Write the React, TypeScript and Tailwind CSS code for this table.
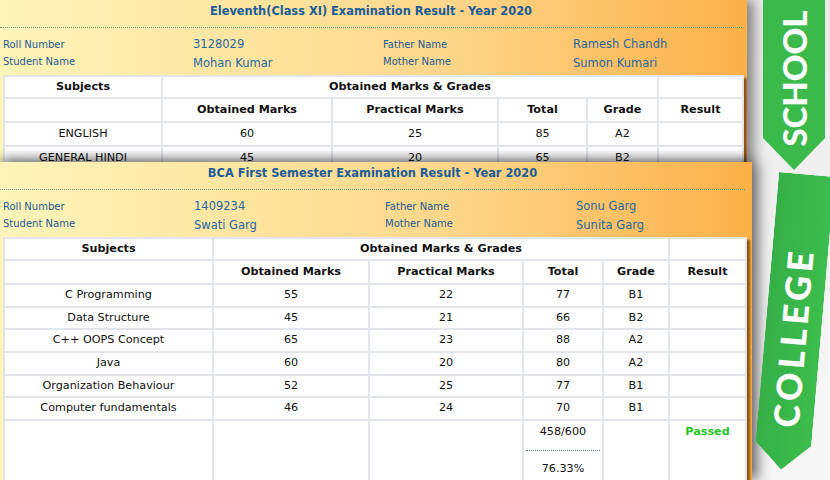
import React from "react";

type Row = [string, string, string, string, string];

const schoolRows: Row[] = [
  ["ENGLISH", "60", "25", "85", "A2"],
  ["GENERAL HINDI", "45", "20", "65", "B2"],
];

const collegeRows: Row[] = [
  ["C Programming", "55", "22", "77", "B1"],
  ["Data Structure", "45", "21", "66", "B2"],
  ["C++ OOPS Concept", "65", "23", "88", "A2"],
  ["Java", "60", "20", "80", "A2"],
  ["Organization Behaviour", "52", "25", "77", "B1"],
  ["Computer fundamentals", "46", "24", "70", "B1"],
];

const cell = "border-2 border-[#e2e6eb] p-0 text-center align-middle text-[11.2px] text-[#111111]";
const head = cell + " font-bold";

function Info(props: {
  grid: string;
  roll: string;
  name: string;
  father: string;
  mother: string;
}) {
  const label = "text-[10px] text-[#1c5b96] whitespace-nowrap";
  const value = "text-[11.5px] text-[#2767a1] whitespace-nowrap";
  return (
    <div className={"grid grid-rows-[17px_17px] pl-[3px] pt-[8px] pb-[5px] leading-[17px] " + props.grid}>
      <div className={label}>Roll Number</div>
      <div className={value}>{props.roll}</div>
      <div className={label}>Father Name</div>
      <div className={value}>{props.father}</div>
      <div className={label}>Student Name</div>
      <div className={value + " pt-[2px]"}>{props.name}</div>
      <div className={label}>Mother Name</div>
      <div className={value + " pt-[2px]"}>{props.mother}</div>
    </div>
  );
}

function ResultTable(props: {
  width: string;
  cols: string[];
  rows: Row[];
  h1: string;
  h2: string;
  rowH: string;
  withTotal?: boolean;
}) {
  return (
    <table
      className={
        "table-fixed border-collapse bg-white shadow-[3px_3px_2px_rgba(120,66,10,0.85)] " + props.width
      }
    >
      <colgroup>
        {props.cols.map((c, i) => (
          <col key={i} className={c} />
        ))}
      </colgroup>
      <tbody>
        <tr className={props.h1}>
          <td className={head}>Subjects</td>
          <td className={head} colSpan={4}>
            Obtained Marks &amp; Grades
          </td>
          <td className={cell}></td>
        </tr>
        <tr className={props.h2}>
          <td className={cell}></td>
          <td className={head}>Obtained Marks</td>
          <td className={head}>Practical Marks</td>
          <td className={head}>Total</td>
          <td className={head}>Grade</td>
          <td className={head}>Result</td>
        </tr>
        {props.rows.map((r, i) => (
          <tr key={i} className={props.rowH}>
            <td className={cell}>{r[0]}</td>
            <td className={cell}>{r[1]}</td>
            <td className={cell}>{r[2]}</td>
            <td className={cell}>{r[3]}</td>
            <td className={cell}>{r[4]}</td>
            <td className={cell}></td>
          </tr>
        ))}
        {props.withTotal && (
          <tr className="h-[80px]">
            <td className={cell + " !align-top"}></td>
            <td className={cell + " !align-top"}></td>
            <td className={cell + " !align-top"}></td>
            <td className={cell + " !align-top"}>
              <div className="pt-[3px] leading-[16px]">458/600</div>
              <div className="mx-[2px] mt-[10px] border-t border-dotted border-[#5c7590]"></div>
              <div className="mt-[10px] leading-[16px]">76.33%</div>
            </td>
            <td className={cell + " !align-top"}></td>
            <td className={cell + " !align-top"}>
              <div className="pt-[3px] leading-[16px] font-bold text-[#1fc41f]">Passed</div>
            </td>
          </tr>
        )}
      </tbody>
    </table>
  );
}

const cardBg =
  "bg-[linear-gradient(to_right,#fef4b9_0%,#fde6a2_30%,#fdd68a_60%,#fbb048_100%)]";

export default function App() {
  return (
    <div className="w-[830px] h-[480px] overflow-hidden flex bg-[linear-gradient(to_bottom,#ececec,#f7f7f7)] font-['DejaVu_Sans',Verdana,sans-serif]">
      <div className="w-[752px] shrink-0 flex flex-col">
        {/* School card */}
        <div
          className={
            "relative z-0 w-[747px] h-[162px] shrink-0 overflow-hidden shadow-[7px_0_12px_rgba(0,0,0,0.45)] " +
            cardBg
          }
        >
          <div className="mr-[5px] pt-[3px] pb-[8px] text-center text-[11.4px] leading-[16px] font-bold text-[#1b5c99] border-b border-dotted border-[#5b957c]">
            Eleventh(Class XI) Examination Result - Year 2020
          </div>
          <Info
            grid="grid-cols-[190px_190px_190px_1fr]"
            roll="3128029"
            name="Mohan Kumar"
            father="Ramesh Chandh"
            mother="Sumon Kumari"
          />
          <div className="pl-[3px]">
            <ResultTable
              width="w-[739px]"
              cols={["w-[158px]", "w-[170px]", "w-[166px]", "w-[89px]", "w-[71px]", "w-[85px]"]}
              rows={schoolRows}
              h1="h-[22px]"
              h2="h-[24px]"
              rowH="h-[24px]"
            />
          </div>
        </div>

        {/* College card */}
        <div
          className={
            "relative z-[1] w-[752px] h-[318px] shrink-0 overflow-hidden shadow-[0_-5px_9px_rgba(0,0,0,0.3),7px_0_12px_rgba(0,0,0,0.45)] " +
            cardBg
          }
        >
          <div className="mr-[7px] pt-[3px] pb-[8px] text-center text-[11.4px] leading-[16px] font-bold text-[#1b5c99] border-b border-dotted border-[#5b957c]">
            BCA First Semester Examination Result - Year 2020
          </div>
          <Info
            grid="grid-cols-[191px_191px_191px_1fr]"
            roll="1409234"
            name="Swati Garg"
            father="Sonu Garg"
            mother="Sunita Garg"
          />
          <div className="pl-[3px]">
            <ResultTable
              width="w-[742px]"
              cols={["w-[209px]", "w-[156px]", "w-[154px]", "w-[80px]", "w-[66px]", "w-[77px]"]}
              rows={collegeRows}
              h1="h-[22px]"
              h2="h-[24px]"
              rowH="h-[22.7px]"
              withTotal
            />
          </div>
        </div>
      </div>

      {/* Ribbons */}
      <div className="relative z-[2] flex-1 flex flex-col">
        <div className="ml-[11px] w-[62px] h-[170px] shrink-0 bg-[#3bb94b] [clip-path:polygon(0_0,100%_0,100%_138px,50%_100%,0_138px)]">
          <div className="h-[156px] flex items-center justify-center">
            <span className="-rotate-90 whitespace-nowrap text-white text-[33px] leading-none font-black font-['Lato',sans-serif]">
              SCHOOL
            </span>
          </div>
        </div>
        <div className="ml-[14px] mt-[4px] w-[56px] h-[296px] shrink-0 rotate-[5deg]">
          <div className="w-full h-full bg-[linear-gradient(to_right,#35b046,#3dbd4d)] [clip-path:polygon(0_0,100%_0,100%_270px,50%_100%,0_270px)] pt-[30px] flex items-center justify-center">
            <span className="-rotate-90 whitespace-nowrap text-white text-[35px] tracking-[4px] leading-none font-black font-['Lato',sans-serif]">
              COLLEGE
            </span>
          </div>
        </div>
      </div>
    </div>
  );
}
